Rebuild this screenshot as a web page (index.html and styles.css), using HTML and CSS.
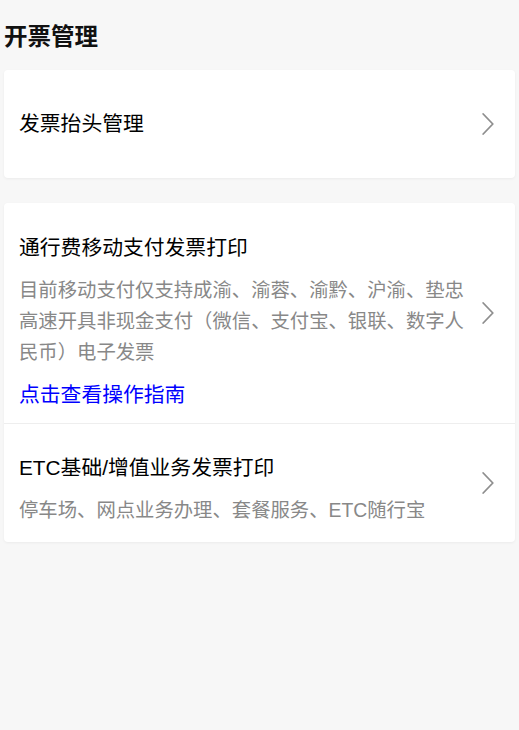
FILE: index.html
```html
<!DOCTYPE html>
<html lang="zh-CN">
<head>
<meta charset="utf-8">
<title>开票管理</title>
<link rel="stylesheet" href="styles.css">
</head>
<body>
<div class="page">
  <h1 class="page-title">开票管理</h1>

  <div class="card card-single">
    <div class="row row-simple">
      <div class="row-main">
        <div class="row-title">发票抬头管理</div>
      </div>
      <svg class="chevron" width="12" height="22" viewBox="0 0 12 22"><polyline points="1.2,1 10.8,11 1.2,21" fill="none" stroke="#8e8e8e" stroke-width="1.8" stroke-linecap="round" stroke-linejoin="round"/></svg>
    </div>
  </div>

  <div class="card">
    <div class="row row-first">
      <div class="row-main">
        <div class="row-title">通行费移动支付发票打印</div>
        <div class="row-desc">目前移动支付仅支持成渝、渝蓉、渝黔、沪渝、垫忠高速开具非现金支付（微信、支付宝、银联、数字人民币）电子发票</div>
        <a class="row-link" href="#">点击查看操作指南</a>
      </div>
      <svg class="chevron" width="12" height="22" viewBox="0 0 12 22"><polyline points="1.2,1 10.8,11 1.2,21" fill="none" stroke="#8e8e8e" stroke-width="1.8" stroke-linecap="round" stroke-linejoin="round"/></svg>
    </div>
    <div class="row row-last">
      <div class="row-main">
        <div class="row-title">ETC基础/增值业务发票打印</div>
        <div class="row-desc">停车场、网点业务办理、套餐服务、ETC随行宝</div>
      </div>
      <svg class="chevron" width="12" height="22" viewBox="0 0 12 22"><polyline points="1.2,1 10.8,11 1.2,21" fill="none" stroke="#8e8e8e" stroke-width="1.8" stroke-linecap="round" stroke-linejoin="round"/></svg>
    </div>
  </div>
</div>
</body>
</html>
```

FILE: styles.css
```css
* { box-sizing: border-box; }
html, body {
  margin: 0;
  padding: 0;
  background: #f7f7f7;
}
body {
  font-family: "Liberation Sans", "Noto Sans CJK SC", sans-serif;
  color: #000;
}
.page {
  padding: 20px 4px 0 4px;
  display: flex;
  flex-direction: column;
}
.page-title {
  margin: 0 0 15px 0;
  font-size: 23.5px;
  line-height: 35px;
  font-weight: bold;
  color: #111;
}
.card {
  background: #fff;
  border-radius: 4px;
  box-shadow: 0 1px 3px rgba(0, 0, 0, 0.05);
  margin-bottom: 25px;
  display: flex;
  flex-direction: column;
}
.row {
  display: flex;
  align-items: center;
  padding: 16px 21px 16px 15px;
}
.row-simple {
  padding-top: 39px;
  padding-bottom: 39px;
}
.row-first {
  padding-top: 13px;
  padding-bottom: 13px;
  border-bottom: 1px solid #eeeeee;
}
.row-main {
  flex: 1;
  min-width: 0;
  display: flex;
  flex-direction: column;
  align-items: flex-start;
}
.row-first .row-main {
  padding-top: 17px;
}
.row-last .row-main {
  padding-top: 13px;
}
.row-title {
  font-size: 20.8px;
  line-height: 30px;
  color: #000;
}
.row-desc {
  margin-top: 12px;
  font-size: 19.35px;
  line-height: 31px;
  color: #888888;
}
.row-link {
  margin-top: 12px;
  font-size: 20.8px;
  line-height: 30px;
  color: #0000ff;
  text-decoration: none;
}
.chevron {
  flex: none;
  margin-left: 16px;
  display: block;
}
```
